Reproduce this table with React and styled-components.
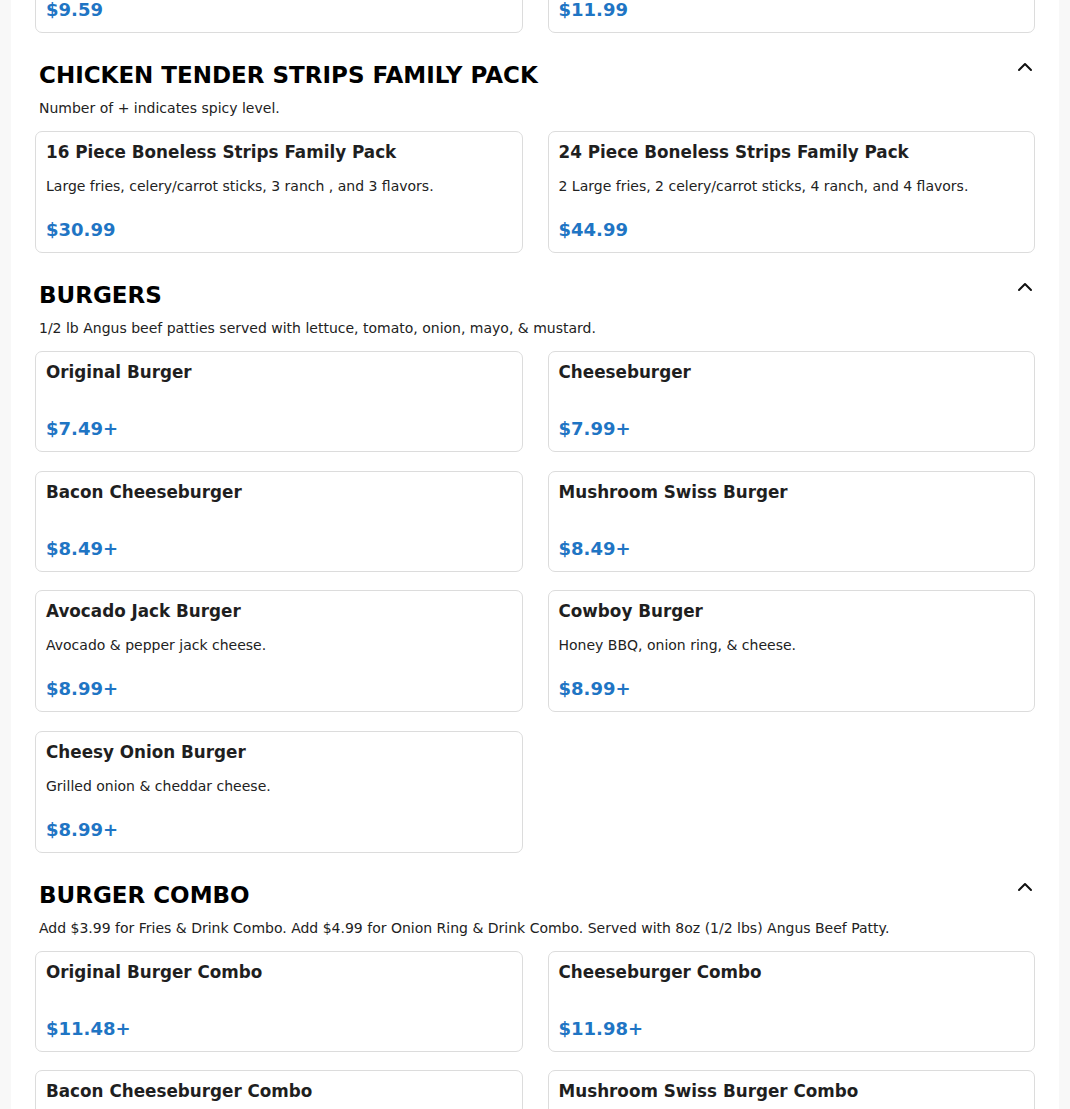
import React from "react";
import styled, { createGlobalStyle } from "styled-components";
import { ChevronUp } from "lucide-react";

const GlobalStyle = createGlobalStyle`
  body {
    margin: 0;
    background: #f8f8f8;
    font-family: "DejaVu Sans", "Liberation Sans", sans-serif;
  }
`;

const menu = [
  {
    title: "CHICKEN TENDER STRIPS FAMILY PACK",
    note: "Number of + indicates spicy level.",
    items: [
      {
        name: "16 Piece Boneless Strips Family Pack",
        desc: "Large fries, celery/carrot sticks, 3 ranch , and 3 flavors.",
        price: "$30.99",
      },
      {
        name: "24 Piece Boneless Strips Family Pack",
        desc: "2 Large fries, 2 celery/carrot sticks, 4 ranch, and 4 flavors.",
        price: "$44.99",
      },
    ],
  },
  {
    title: "BURGERS",
    note: "1/2 lb Angus beef patties served with lettuce, tomato, onion, mayo, & mustard.",
    items: [
      { name: "Original Burger", price: "$7.49+" },
      { name: "Cheeseburger", price: "$7.99+" },
      { name: "Bacon Cheeseburger", price: "$8.49+" },
      { name: "Mushroom Swiss Burger", price: "$8.49+" },
      { name: "Avocado Jack Burger", desc: "Avocado & pepper jack cheese.", price: "$8.99+" },
      { name: "Cowboy Burger", desc: "Honey BBQ, onion ring, & cheese.", price: "$8.99+" },
      { name: "Cheesy Onion Burger", desc: "Grilled onion & cheddar cheese.", price: "$8.99+" },
    ],
  },
  {
    title: "BURGER COMBO",
    note: "Add $3.99 for Fries & Drink Combo. Add $4.99 for Onion Ring & Drink Combo. Served with 8oz (1/2 lbs) Angus Beef Patty.",
    items: [
      { name: "Original Burger Combo", price: "$11.48+" },
      { name: "Cheeseburger Combo", price: "$11.98+" },
      { name: "Bacon Cheeseburger Combo", price: "$12.48+" },
      { name: "Mushroom Swiss Burger Combo", price: "$12.48+" },
    ],
  },
];

// last row of the section above, mostly scrolled out of view
const previousRow = [
  { name: "Boneless Strips", price: "$9.59" },
  { name: "Boneless Strips Combo", price: "$11.99" },
];

const Page = styled.div`
  height: 100vh;
  overflow: hidden;
  padding: 0 11px;
`;

const Container = styled.div`
  background: #fff;
  padding: 0 24px;
  min-height: 100%;
`;

const Section = styled.section`
  padding-top: 28px;
`;

const Header = styled.div`
  display: flex;
  justify-content: space-between;
  align-items: flex-start;
  padding-left: 4px;
`;

const Title = styled.h2`
  margin: 0;
  font-size: 23px;
  line-height: 28px;
  font-weight: bold;
  color: #000;
`;

const Toggle = styled.div`
  display: flex;
  margin-top: -6px;
  margin-right: -2px;
  color: #111;
`;

const Note = styled.p`
  margin: 9px 0 13px;
  padding-left: 4px;
  font-size: 14px;
  line-height: 20px;
  color: #222;
`;

const Grid = styled.div`
  display: grid;
  grid-template-columns: repeat(2, 1fr);
  column-gap: 25px;
  row-gap: 18.5px;
  margin-top: ${(p) => p.$offset || 0}px;
`;

const Card = styled.div`
  display: flex;
  flex-direction: column;
  padding: 10px 10px 11px;
  border: 1px solid #dcdcdc;
  border-radius: 7px;
  background: #fff;
`;

const ItemName = styled.div`
  font-size: 16.8px;
  line-height: 20px;
  font-weight: bold;
  color: #1f1f1f;
  margin-bottom: 14px;
`;

const ItemDesc = styled.div`
  font-size: 14px;
  line-height: 21px;
  color: #222;
`;

const Price = styled.div`
  margin-top: auto;
  padding-top: 22px;
  font-size: 18px;
  line-height: 22px;
  font-weight: bold;
  color: #1f75c4;
`;

const MenuCard = ({ item }) => (
  <Card>
    <ItemName>{item.name}</ItemName>
    {item.desc && <ItemDesc>{item.desc}</ItemDesc>}
    <Price>{item.price}</Price>
  </Card>
);

const App = () => {
  return (
    <>
      <GlobalStyle />
      <Page>
        <Container>
          <Grid $offset={-68}>
            {previousRow.map((item) => (
              <MenuCard key={item.name} item={item} />
            ))}
          </Grid>
          {menu.map((section) => (
            <Section key={section.title}>
              <Header>
                <Title>{section.title}</Title>
                <Toggle>
                  <ChevronUp size={24} strokeWidth={2} />
                </Toggle>
              </Header>
              <Note>{section.note}</Note>
              <Grid>
                {section.items.map((item) => (
                  <MenuCard key={item.name} item={item} />
                ))}
              </Grid>
            </Section>
          ))}
        </Container>
      </Page>
    </>
  );
};

export default App;
